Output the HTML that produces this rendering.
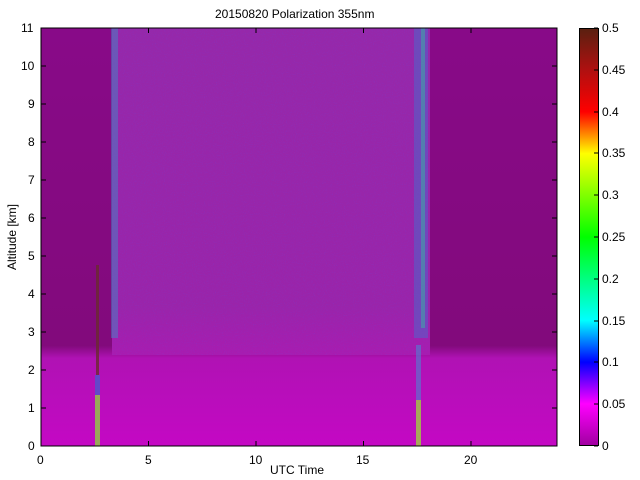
<!DOCTYPE html>
<html><head><style>
body{margin:0;width:640px;height:480px;background:#fff;font-family:"Liberation Sans",sans-serif;position:relative;overflow:hidden}
.t{position:absolute;font-size:12px;color:#000;white-space:nowrap}
</style></head><body>
<div class="t" style="left:215px;top:7px">20150820 Polarization 355nm</div>
<svg width="640" height="480" style="position:absolute;left:0;top:0">
<defs>
<linearGradient id="cb" x1="0" y1="1" x2="0" y2="0">
<stop offset="0" stop-color="#a000a0"/>
<stop offset="0.1" stop-color="#ff00ff"/>
<stop offset="0.2" stop-color="#0000ff"/>
<stop offset="0.3" stop-color="#00ffff"/>
<stop offset="0.5" stop-color="#00ff00"/>
<stop offset="0.7" stop-color="#ffff00"/>
<stop offset="0.8" stop-color="#ff0000"/>
<stop offset="0.9" stop-color="#b01010"/>
<stop offset="1" stop-color="#5a2010"/>
</linearGradient>
<linearGradient id="mid" x1="0" y1="0" x2="0" y2="1">
<stop offset="0" stop-color="#9628aa"/>
<stop offset="0.85" stop-color="#9a24aa"/>
<stop offset="1" stop-color="#a81cb0"/>
</linearGradient>
<linearGradient id="side" x1="0" y1="0" x2="0" y2="1">
<stop offset="0" stop-color="#880a88"/>
<stop offset="0.76" stop-color="#820a7c"/>
<stop offset="0.79" stop-color="#b012b4"/>
<stop offset="1" stop-color="#c408c4"/>
</linearGradient>
<filter id="n" x="0" y="0" width="1" height="1"><feTurbulence type="fractalNoise" baseFrequency="0.9" numOctaves="1" seed="3"/><feColorMatrix values="0 0 0 0 0.1  0 0 0 0 0.1  0 0 0 0 0.9  0 0 0 1.2 -0.6"/></filter>
</defs>
<rect x="41" y="28" width="516" height="418" fill="url(#side)"/>
<rect x="112" y="28" width="318" height="327" fill="url(#mid)"/>
<rect x="112" y="28" width="318" height="327" filter="url(#n)" opacity="0.4"/>
<rect x="111" y="28" width="7" height="310" fill="#3a90c8" opacity="0.45"/>
<rect x="414" y="28" width="14" height="310" fill="#4070d0" opacity="0.45"/>
<rect x="421" y="28" width="4" height="300" fill="#30c0a0" opacity="0.45"/>
<rect x="96" y="265" width="3" height="110" fill="#6a2a30" opacity="0.8"/>
<rect x="95" y="375" width="5" height="20" fill="#4060d0" opacity="0.7"/>
<rect x="95" y="395" width="5" height="51" fill="#90d040" opacity="0.8"/>
<rect x="416" y="345" width="5" height="55" fill="#5080d0" opacity="0.6"/>
<rect x="416" y="400" width="5" height="46" fill="#a0d040" opacity="0.8"/>
<rect x="41" y="28" width="516" height="418" fill="none" stroke="#000" stroke-width="1"/>
<rect x="579.5" y="28.5" width="19" height="417" fill="url(#cb)" stroke="#000"/>
<g stroke="#000">
<path d="M41 446v-5M148.5 446v-5M256 446v-5M363.5 446v-5M471 446v-5M41 28v5M148.5 28v5M256 28v5M363.5 28v5M471 28v5"/>
<path d="M41 446h5M41 408h5M41 370h5M41 332h5M41 294h5M41 256h5M41 218h5M41 180h5M41 142h5M41 104h5M41 66h5M41 28h5"/>
<path d="M557 446h-5M557 408h-5M557 370h-5M557 332h-5M557 294h-5M557 256h-5M557 218h-5M557 180h-5M557 142h-5M557 104h-5M557 66h-5M557 28h-5"/>
<path d="M598 446h-4M598 404h-4M598 362h-4M598 321h-4M598 279h-4M598 237h-4M598 195h-4M598 153h-4M598 112h-4M598 70h-4M598 28h-4"/>
</g>
<g font-family="Liberation Sans" font-size="12" fill="#000">
<text x="37" y="464">0</text><text x="145" y="464">5</text><text x="249" y="464">10</text><text x="356" y="464">15</text><text x="464" y="464">20</text>
<text x="28" y="450" >0</text><text x="28" y="412">1</text><text x="28" y="374">2</text><text x="28" y="336">3</text><text x="28" y="298">4</text><text x="28" y="260">5</text><text x="28" y="222">6</text><text x="28" y="184">7</text><text x="28" y="146">8</text><text x="28" y="108">9</text><text x="21" y="70">10</text><text x="21" y="32">11</text>
<text x="602" y="450">0</text><text x="602" y="408">0.05</text><text x="602" y="366">0.1</text><text x="602" y="325">0.15</text><text x="602" y="283">0.2</text><text x="602" y="241">0.25</text><text x="602" y="199">0.3</text><text x="602" y="157">0.35</text><text x="602" y="116">0.4</text><text x="602" y="74">0.45</text><text x="602" y="32">0.5</text>
<text x="270" y="474">UTC Time</text>
<text transform="translate(16,237) rotate(-90)" text-anchor="middle">Altitude [km]</text>
</g>
</svg>
</body></html>
